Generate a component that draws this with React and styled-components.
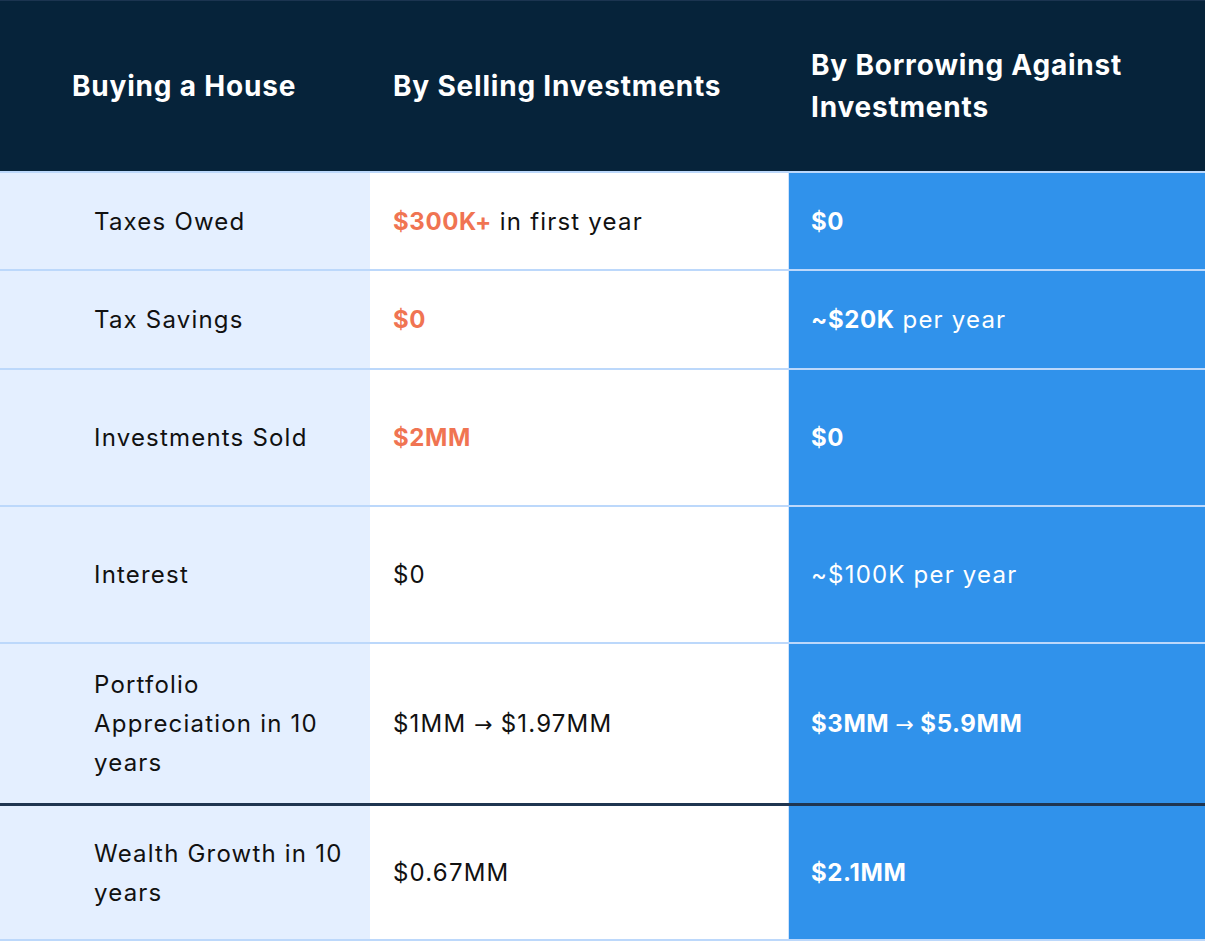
import React from 'react';
import styled, { createGlobalStyle } from 'styled-components';

const GlobalStyle = createGlobalStyle`
  html, body {
    margin: 0;
    padding: 0;
    background: #ffffff;
  }
  body {
    font-family: Inter, "Open Sans", Arial, sans-serif;
    -webkit-font-smoothing: antialiased;
  }
`;

const Table = styled.div`
  width: 1205px;
  display: flex;
  flex-direction: column;
`;

const Row = styled.div`
  display: grid;
  grid-template-columns: 370px 418px 1fr;
  height: ${p => p.h}px;
  border-bottom: ${p => (p.dark ? '3px solid #1f3550' : '2px solid #bcd8fb')};
`;

const HeadRow = styled(Row)`
  background: #06233a;
  border-top: 1px solid #1b3450;
  box-sizing: border-box;
`;

const HeadCell = styled.div`
  display: flex;
  align-items: center;
  padding-left: ${p => p.pl}px;
  padding-right: 60px;
  color: #ffffff;
  font-size: 28px;
  font-weight: 700;
  line-height: 42px;
  letter-spacing: 0.8px;
`;

const Cell = styled.div`
  display: flex;
  align-items: center;
  padding-left: ${p => p.pl}px;
  padding-right: 20px;
  font-size: 24px;
  line-height: 39px;
  letter-spacing: 1.2px;
  color: #111111;
  ${p => p.kind === 'label' && `background: #e4efff;`}
  ${p => p.kind === 'sell' && `background: #ffffff;`}
  ${p => p.kind === 'borrow' && `
    background: #3092eb;
    color: #ffffff;
    border-left: 1px solid #cfe3fc;
  `}
`;

const LabelText = styled.span`
  max-width: 262px;
`;

const Strong = styled.b`
  font-weight: 700;
  letter-spacing: 0.6px;
  color: ${p => (p.orange ? '#f07452' : 'inherit')};
`;

const Arrow = styled.span`
  font-family: "DejaVu Sans", sans-serif;
  font-size: 22px;
  font-weight: 400;
  letter-spacing: 0;
`;

const rows = [
  {
    h: 96,
    label: 'Taxes Owed',
    sell: <><Strong orange>$300K+</Strong> in first year</>,
    borrow: <Strong>$0</Strong>,
  },
  {
    h: 97,
    label: 'Tax Savings',
    sell: <Strong orange>$0</Strong>,
    borrow: <><Strong>~$20K</Strong> per year</>,
  },
  {
    h: 135,
    label: 'Investments Sold',
    sell: <Strong orange>$2MM</Strong>,
    borrow: <Strong>$0</Strong>,
  },
  {
    h: 135,
    label: 'Interest',
    sell: '$0',
    borrow: '~$100K per year',
  },
  {
    h: 159,
    dark: true,
    label: 'Portfolio Appreciation in 10 years',
    sell: <>$1MM <Arrow>→</Arrow> $1.97MM</>,
    borrow: <Strong>$3MM <Arrow>→</Arrow> $5.9MM</Strong>,
  },
  {
    h: 133,
    label: 'Wealth Growth in 10 years',
    sell: '$0.67MM',
    borrow: <Strong>$2.1MM</Strong>,
  },
];

export default function App() {
  return (
    <>
      <GlobalStyle />
      <Table>
        <HeadRow h={173}>
          <HeadCell pl={72}>Buying a House</HeadCell>
          <HeadCell pl={23}>By Selling Investments</HeadCell>
          <HeadCell pl={23}>By Borrowing Against Investments</HeadCell>
        </HeadRow>
        {rows.map(r => (
          <Row key={r.label} h={r.h} dark={r.dark}>
            <Cell kind="label" pl={94}>
              <LabelText>{r.label}</LabelText>
            </Cell>
            <Cell kind="sell" pl={23}>
              <span>{r.sell}</span>
            </Cell>
            <Cell kind="borrow" pl={22}>
              <span>{r.borrow}</span>
            </Cell>
          </Row>
        ))}
      </Table>
    </>
  );
}
